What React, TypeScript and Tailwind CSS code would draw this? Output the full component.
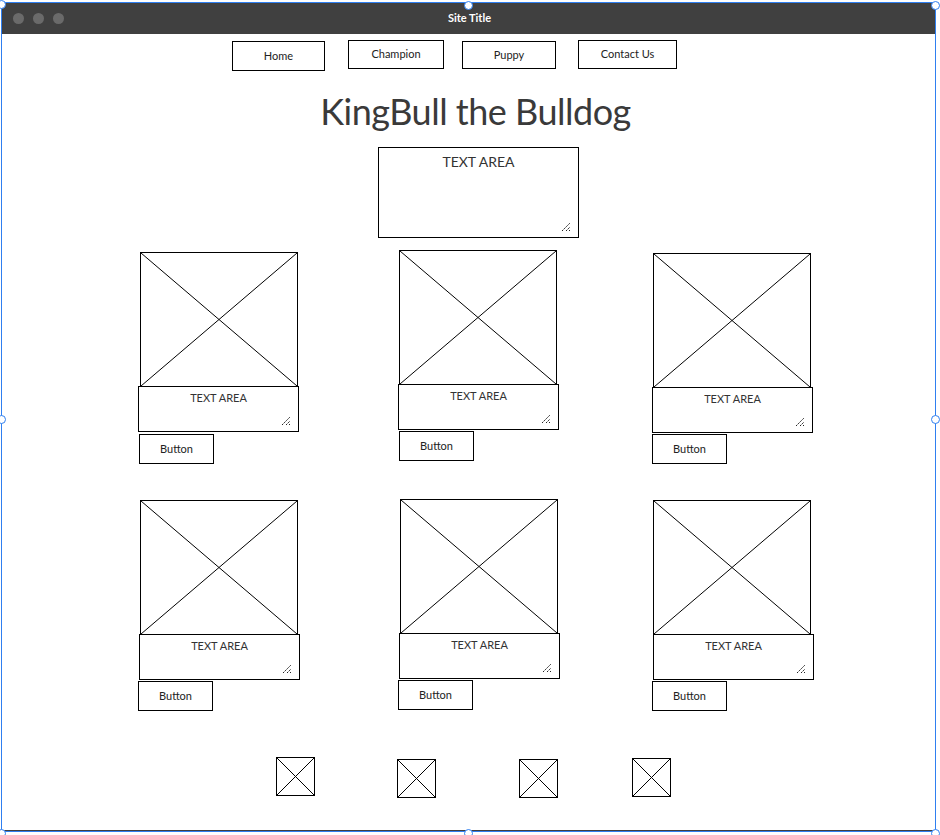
import * as React from "react"

// wireframe pieces
const XBox = ({ className = "" }: { className?: string }) => (
  <div className={"relative border border-black bg-white " + className}>
    <svg className="absolute inset-0 h-full w-full" preserveAspectRatio="none" viewBox="0 0 100 100">
      <line x1="0" y1="0" x2="100" y2="100" stroke="#000" strokeWidth="1" vectorEffect="non-scaling-stroke" />
      <line x1="100" y1="0" x2="0" y2="100" stroke="#000" strokeWidth="1" vectorEffect="non-scaling-stroke" />
    </svg>
  </div>
)

const Grip = () => (
  <svg className="absolute bottom-[5px] right-[7px]" width="10" height="10" viewBox="0 0 10 10">
    <line x1="1" y1="9" x2="9" y2="1" stroke="#222" strokeWidth="1" strokeDasharray="2 1" />
    <line x1="5" y1="9" x2="9" y2="5" stroke="#222" strokeWidth="1" strokeDasharray="2 1" />
    <rect x="8" y="8" width="1" height="1" fill="#222" />
  </svg>
)

const TextArea = ({ className = "", big = false }: { className?: string; big?: boolean }) => (
  <div className={"relative border border-black bg-white text-center text-[#333] " + className}>
    <div className={big ? "pt-[3px] text-[14px]" : "pt-[3px] text-[11px]"}>TEXT AREA</div>
    <Grip />
  </div>
)

const Btn = ({ label, className = "" }: { label: string; className?: string }) => (
  <div className={"flex items-center justify-center border border-black bg-white text-[11px] text-[#222] " + className}>
    {label}
  </div>
)

type CardProps = { className: string; imgClass: string; btnClass: string }

const Card = ({ className, imgClass, btnClass }: CardProps) => (
  <div className={"flex w-[161px] flex-col " + className}>
    <XBox className={"h-[135px] w-[158px] " + imgClass} />
    <TextArea className="-mt-px h-[46px] w-[161px]" />
    <Btn label="Button" className={"h-[30px] w-[75px] " + btnClass} />
  </div>
)

const Handle = ({ className }: { className: string }) => (
  <div className={"absolute h-[9px] w-[9px] rounded-full border border-[#2f7ff0] bg-white " + className} />
)

export default function App() {
  return (
    <div className="relative h-[835px] w-[940px] bg-white" style={{ fontFamily: "Lato, 'Open Sans', sans-serif" }}>
      <div className="ml-px mt-[2px] h-[830px] w-[935px] border border-[#2f7ff0]">
        {/* title bar */}
        <div className="relative flex h-[31px] items-center bg-[#404040]">
          <div className="flex gap-[9px] pl-[11px]">
            <span className="h-[11px] w-[11px] rounded-full bg-[#6a6a6a]" />
            <span className="h-[11px] w-[11px] rounded-full bg-[#6a6a6a]" />
            <span className="h-[11px] w-[11px] rounded-full bg-[#6a6a6a]" />
          </div>
          <div className="flex-1 pr-[60px] text-center text-[11px] font-bold text-white">Site Title</div>
        </div>

        <div className="flex h-[797px] flex-col border-b border-[#404040]">
          {/* nav */}
          <div className="flex items-start pl-[230px] pt-[6px]">
            <Btn label="Home" className="mt-px h-[30px] w-[93px]" />
            <Btn label="Champion" className="ml-[23px] h-[29px] w-[96px]" />
            <Btn label="Puppy" className="ml-[18px] mt-px h-[28px] w-[94px]" />
            <Btn label="Contact Us" className="ml-[22px] h-[29px] w-[99px]" />
          </div>

          <h1 className="mt-[18px] pl-[14px] text-center text-[36px] leading-[44px] tracking-[-0.5px] text-[#3a3a3a]">
            KingBull the Bulldog
          </h1>

          <div className="mt-[14px] pl-[376px]">
            <TextArea big className="h-[91px] w-[201px]" />
          </div>

          {/* row 1 */}
          <div className="mt-[12px] flex h-[249px] items-start">
            <Card className="ml-[136px] mt-[2px]" imgClass="ml-[2px]" btnClass="ml-px mt-[2px]" />
            <Card className="ml-[99px]" imgClass="ml-px" btnClass="ml-px mt-px" />
            <Card className="ml-[93px] mt-[3px]" imgClass="ml-px" btnClass="mt-px" />
          </div>

          {/* row 2 */}
          <div className="flex h-[257px] items-start">
            <Card className="ml-[137px] mt-px" imgClass="ml-px" btnClass="-ml-px mt-px" />
            <Card className="ml-[99px]" imgClass="ml-px" btnClass="-ml-px mt-px" />
            <Card className="ml-[93px] mt-px" imgClass="" btnClass="-ml-px mt-px" />
          </div>

          {/* footer icons */}
          <div className="flex items-start pl-[274px]">
            <XBox className="mt-px h-[39px] w-[39px]" />
            <XBox className="ml-[82px] mt-[3px] h-[39px] w-[39px]" />
            <XBox className="ml-[83px] mt-[3px] h-[39px] w-[39px]" />
            <XBox className="ml-[74px] mt-[2px] h-[39px] w-[39px]" />
          </div>
        </div>
      </div>

      {/* selection handles */}
      <Handle className="-left-[3px] -top-[2px]" />
      <Handle className="left-[464px] -top-[1px]" />
      <Handle className="left-[931px] -top-[1px]" />
      <Handle className="-left-[3px] top-[413px]" />
      <Handle className="left-[931px] top-[413px]" />
      <Handle className="-left-[3px] top-[827px]" />
      <Handle className="left-[464px] top-[827px]" />
      <Handle className="left-[931px] top-[827px]" />
    </div>
  )
}
